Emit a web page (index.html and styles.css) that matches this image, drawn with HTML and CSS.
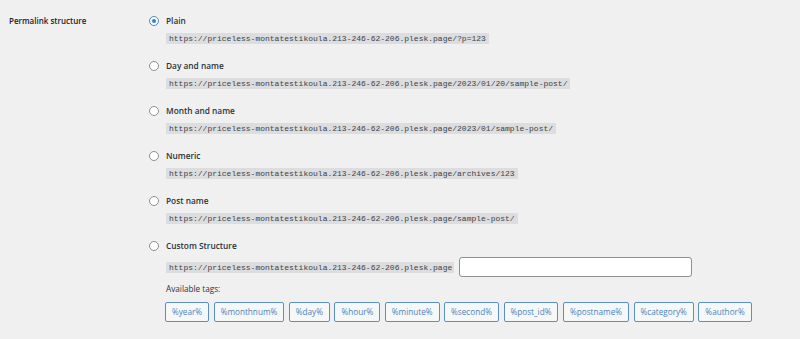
FILE: index.html
```html
<!DOCTYPE html>
<html>
<head>
<meta charset="utf-8">
<link rel="stylesheet" href="styles.css">
</head>
<body>
<div class="form-row">
  <div class="th">Permalink structure</div>
  <div class="td">
    <div class="option">
      <label class="radio-label"><span class="radio checked"></span>Plain</label>
      <code>https://priceless-montatestikoula.213-246-62-206.plesk.page/?p=123</code>
    </div>
    <div class="option">
      <label class="radio-label"><span class="radio"></span>Day and name</label>
      <code>https://priceless-montatestikoula.213-246-62-206.plesk.page/2023/01/20/sample-post/</code>
    </div>
    <div class="option">
      <label class="radio-label"><span class="radio"></span>Month and name</label>
      <code>https://priceless-montatestikoula.213-246-62-206.plesk.page/2023/01/sample-post/</code>
    </div>
    <div class="option">
      <label class="radio-label"><span class="radio"></span>Numeric</label>
      <code>https://priceless-montatestikoula.213-246-62-206.plesk.page/archives/123</code>
    </div>
    <div class="option">
      <label class="radio-label"><span class="radio"></span>Post name</label>
      <code>https://priceless-montatestikoula.213-246-62-206.plesk.page/sample-post/</code>
    </div>
    <div class="option custom">
      <label class="radio-label"><span class="radio"></span>Custom Structure</label>
      <div class="custom-row">
        <code>https://priceless-montatestikoula.213-246-62-206.plesk.page</code>
        <input class="text-input" type="text" value="">
      </div>
      <div class="avail">Available tags:</div>
      <div class="tags">
        <button class="tag">%year%</button>
        <button class="tag">%monthnum%</button>
        <button class="tag">%day%</button>
        <button class="tag">%hour%</button>
        <button class="tag">%minute%</button>
        <button class="tag">%second%</button>
        <button class="tag">%post_id%</button>
        <button class="tag">%postname%</button>
        <button class="tag">%category%</button>
        <button class="tag">%author%</button>
      </div>
    </div>
  </div>
</div>
</body>
</html>
```
FILE: styles.css
```css
html, body {
  margin: 0;
  padding: 0;
  background: #f0f0f1;
  width: 800px;
  height: 339px;
  overflow: hidden;
  font-family: "Open Sans", "Noto Sans", sans-serif;
  color: #1d2327;
}

.form-row {
  display: flex;
  padding-top: 14px;
}

.th {
  width: 149px;
  padding-left: 9px;
  box-sizing: border-box;
  font-size: 8px;
  font-weight: 600;
  line-height: 14px;
  color: #1d2327;
}

.td {
  display: flex;
  flex-direction: column;
}

.option {
  display: flex;
  flex-direction: column;
  align-items: flex-start;
  height: 45px;
}

.radio-label {
  display: flex;
  align-items: center;
  height: 14px;
  font-size: 8.3px;
  line-height: 14px;
  font-weight: 600;
  color: #2c3338;
}

.radio {
  width: 10px;
  height: 10px;
  box-sizing: border-box;
  border: 1px solid #8c8f94;
  border-radius: 50%;
  background: #fff;
  margin-right: 7px;
  position: relative;
}

.radio.checked {
  border-color: #4f86bd;
}

.radio.checked::before {
  content: "";
  position: absolute;
  left: 2px;
  top: 2px;
  width: 4px;
  height: 4px;
  border-radius: 50%;
  background: #3582c4;
}

code {
  display: inline-block;
  margin-top: 5px;
  margin-left: 17px;
  padding: 0 3px;
  height: 11px;
  line-height: 11px;
  font-family: "Liberation Mono", "DejaVu Sans Mono", monospace;
  font-size: 8px;
  background: #dddddf;
  color: #3c434a;
}

.custom-row {
  display: flex;
  align-items: center;
  margin-top: 4px;
  margin-left: 17px;
}

.custom-row code {
  margin: 0;
  padding: 0 2px 0 3px;
}

.text-input {
  margin-left: 5px;
  width: 233px;
  height: 20px;
  box-sizing: border-box;
  border: 1px solid #8c8f94;
  border-radius: 3px;
  background: #fff;
  padding: 0 4px;
}

.avail {
  margin-top: 5px;
  margin-left: 17px;
  font-size: 8.2px;
  line-height: 14px;
  color: #2c3338;
}

.tags {
  display: flex;
  gap: 4.5px;
  margin-top: 6px;
  margin-left: 16px;
}

.tag {
  height: 20px;
  box-sizing: border-box;
  padding: 0 6px;
  border: 1px solid #5a90c6;
  border-radius: 2px;
  background: #f6f7f7;
  color: #4a84be;
  font-family: "Open Sans", "Noto Sans", sans-serif;
  font-size: 8.2px;
  line-height: 18px;
}
```
